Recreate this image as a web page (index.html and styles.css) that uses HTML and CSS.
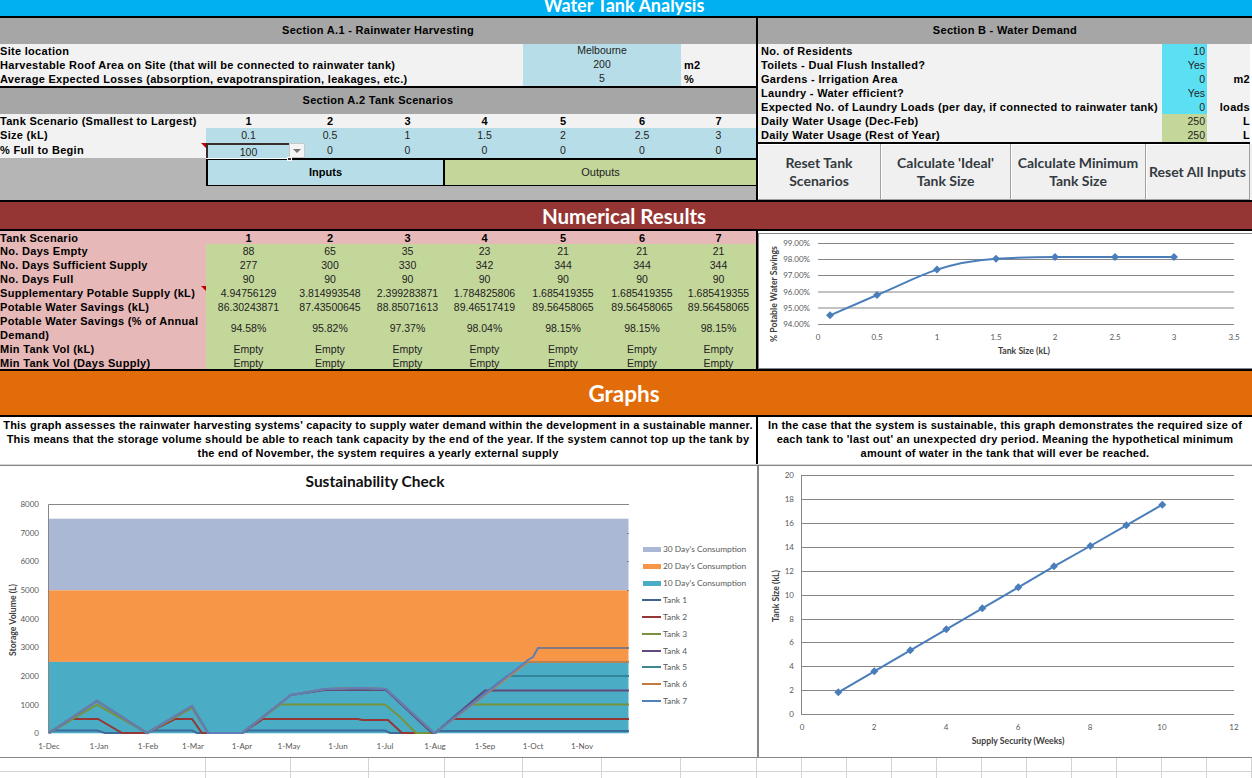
FILE: index.html
```html
<!DOCTYPE html>
<html lang="en">
<head>
    <meta charset="UTF-8">
    <title>Water Tank Analysis</title>
    <link rel="stylesheet" href="styles.css">
</head>
<body>
<div class="sheet">
    <div class="title">Water Tank Analysis</div>

    <div class="top">
        <div class="sec-a">
            <div class="sec-head">Section A.1 - Rainwater Harvesting</div>
            <div class="a1-row"><span class="lbl">Site location</span><span class="val blue">Melbourne</span><span class="lbl unit"></span></div>
            <div class="a1-row"><span class="lbl">Harvestable Roof Area on Site (that will be connected to rainwater tank)</span><span class="val blue">200</span><span class="lbl unit">m2</span></div>
            <div class="a1-row"><span class="lbl">Average Expected Losses (absorption, evapotranspiration, leakages, etc.)</span><span class="val blue">5</span><span class="lbl unit">%</span></div>

            <div class="sec-head sec-head-ruled">Section A.2 Tank Scenarios</div>
            <div class="a2-grid">
                <span class="lbl">Tank Scenario (Smallest to Largest)</span>
                <b>1</b><b>2</b><b>3</b><b>4</b><b>5</b><b>6</b><b>7</b>
                <span class="lbl">Size (kL)</span>
                <span class="val blue">0.1</span><span class="val blue">0.5</span><span class="val blue">1</span><span class="val blue">1.5</span><span class="val blue">2</span><span class="val blue">2.5</span><span class="val blue">3</span>
                <span class="lbl has-note">% Full to Begin<i class="note"></i></span>
                <span class="val blue selected">100<i class="dropdown"></i><i class="handle"></i></span>
                <span class="val blue">0</span><span class="val blue">0</span><span class="val blue">0</span><span class="val blue">0</span><span class="val blue">0</span><span class="val blue">0</span>
            </div>
            <div class="key">
                <div class="key-in">Inputs</div>
                <div class="key-out">Outputs</div>
            </div>
        </div>

        <div class="sec-b">
            <div class="sec-head">Section B - Water Demand</div>
            <div class="b-grid">
                <span class="lbl">No. of Residents</span><span class="val cyan">10</span><span class="lbl unit"></span>
                <span class="lbl">Toilets - Dual Flush Installed?</span><span class="val cyan">Yes</span><span class="lbl unit"></span>
                <span class="lbl">Gardens - Irrigation Area</span><span class="val cyan">0</span><span class="lbl unit">m2</span>
                <span class="lbl">Laundry - Water efficient?</span><span class="val cyan">Yes</span><span class="lbl unit"></span>
                <span class="lbl">Expected No. of Laundry Loads (per day, if connected to rainwater tank)</span><span class="val cyan">0</span><span class="lbl unit">loads</span>
                <span class="lbl">Daily Water Usage (Dec-Feb)</span><span class="val green">250</span><span class="lbl unit">L</span>
                <span class="lbl">Daily Water Usage (Rest of Year)</span><span class="val green">250</span><span class="lbl unit">L</span>
            </div>
            <div class="buttons">
                <button>Reset Tank<br>Scenarios</button>
                <button>Calculate 'Ideal'<br>Tank Size</button>
                <button>Calculate Minimum<br>Tank Size</button>
                <button>Reset All Inputs</button>
            </div>
        </div>
    </div>

    <div class="banner banner-red">Numerical Results</div>

    <div class="results">
        <div class="res-grid">
            <span class="lbl pink">Tank Scenario</span>
            <b class="pink">1</b><b class="pink">2</b><b class="pink">3</b><b class="pink">4</b><b class="pink">5</b><b class="pink">6</b><b class="pink">7</b>

            <span class="lbl pink">No. Days Empty</span>
            <span class="val green">88</span><span class="val green">65</span><span class="val green">35</span><span class="val green">23</span><span class="val green">21</span><span class="val green">21</span><span class="val green">21</span>

            <span class="lbl pink">No. Days Sufficient Supply</span>
            <span class="val green">277</span><span class="val green">300</span><span class="val green">330</span><span class="val green">342</span><span class="val green">344</span><span class="val green">344</span><span class="val green">344</span>

            <span class="lbl pink">No. Days Full</span>
            <span class="val green">90</span><span class="val green">90</span><span class="val green">90</span><span class="val green">90</span><span class="val green">90</span><span class="val green">90</span><span class="val green">90</span>

            <span class="lbl pink has-note">Supplementary Potable Supply (kL)<i class="note"></i></span>
            <span class="val green">4.94756129</span><span class="val green">3.814993548</span><span class="val green">2.399283871</span><span class="val green">1.784825806</span><span class="val green">1.685419355</span><span class="val green">1.685419355</span><span class="val green">1.685419355</span>

            <span class="lbl pink">Potable Water Savings (kL)</span>
            <span class="val green">86.30243871</span><span class="val green">87.43500645</span><span class="val green">88.85071613</span><span class="val green">89.46517419</span><span class="val green">89.56458065</span><span class="val green">89.56458065</span><span class="val green">89.56458065</span>

            <span class="lbl pink lbl-wrap">Potable Water Savings (% of Annual Demand)</span>
            <span class="val green">94.58%</span><span class="val green">95.82%</span><span class="val green">97.37%</span><span class="val green">98.04%</span><span class="val green">98.15%</span><span class="val green">98.15%</span><span class="val green">98.15%</span>

            <span class="lbl pink">Min Tank Vol (kL)</span>
            <span class="val green">Empty</span><span class="val green">Empty</span><span class="val green">Empty</span><span class="val green">Empty</span><span class="val green">Empty</span><span class="val green">Empty</span><span class="val green">Empty</span>

            <span class="lbl pink">Min Tank Vol (Days Supply)</span>
            <span class="val green">Empty</span><span class="val green">Empty</span><span class="val green">Empty</span><span class="val green">Empty</span><span class="val green">Empty</span><span class="val green">Empty</span><span class="val green">Empty</span>
        </div>

        <svg class="chart" width="494" height="138" viewBox="758 231 494 138">
            <rect x="758.5" y="233.5" width="500" height="135" fill="#fff" stroke="#868686"/>
            <path class="grid" d="M818 243.5H1234M818 259.5H1234M818 275.5H1234M818 292H1234M818 308H1234M818 324.5H1234"/>
            <g class="tick" text-anchor="end">
                <text x="810" y="246">99.00%</text>
                <text x="810" y="262">98.00%</text>
                <text x="810" y="278">97.00%</text>
                <text x="810" y="295">96.00%</text>
                <text x="810" y="311">95.00%</text>
                <text x="810" y="327">94.00%</text>
            </g>
            <g class="tick" text-anchor="middle">
                <text x="818" y="340">0</text>
                <text x="877" y="340">0.5</text>
                <text x="937" y="340">1</text>
                <text x="996" y="340">1.5</text>
                <text x="1055" y="340">2</text>
                <text x="1115" y="340">2.5</text>
                <text x="1174" y="340">3</text>
                <text x="1234" y="340">3.5</text>
            </g>
            <text class="axis-title" x="1024" y="354" text-anchor="middle">Tank Size (kL)</text>
            <text class="axis-title" transform="translate(777 294) rotate(-90)" text-anchor="middle">% Potable Water Savings</text>
            <path class="series" d="M830 315.3L877 295C897 287 917 276 937 269.6C957 263 976 260 996 258.7C1016 257.5 1035 257 1055 257L1174 257"/>
            <g class="marks">
                <path d="M830 311.3l4 4-4 4-4-4z"/>
                <path d="M877 291l4 4-4 4-4-4z"/>
                <path d="M937 265.6l4 4-4 4-4-4z"/>
                <path d="M996 254.7l4 4-4 4-4-4z"/>
                <path d="M1055 253l4 4-4 4-4-4z"/>
                <path d="M1115 253l4 4-4 4-4-4z"/>
                <path d="M1174 253l4 4-4 4-4-4z"/>
            </g>
        </svg>
    </div>

    <div class="banner banner-orange">Graphs</div>

    <div class="notes">
        <p>This graph assesses the rainwater harvesting systems' capacity to supply water demand within the development in a sustainable manner.<br>This means that the storage volume should be able to reach tank capacity by the end of the year. If the system cannot top up the tank by<br>the end of November, the system requires a yearly external supply</p>
        <p>In the case that the system is sustainable, this graph demonstrates the required size of<br>each tank to 'last out' an unexpected dry period. Meaning the hypothetical minimum<br>amount of water in the tank that will ever be reached.</p>
    </div>

    <div class="charts">
        <svg class="chart" width="758" height="293" viewBox="0 465 758 293">
            <rect x="-5" y="465.5" width="762.5" height="292" fill="#fff" stroke="#868686"/>
            <text class="chart-title" x="375" y="487" text-anchor="middle">Sustainability Check</text>

            <rect x="49" y="518.7" width="579.5" height="71.6" fill="#aab8d6"/>
            <rect x="49" y="590.3" width="579.5" height="71.6" fill="#f79646"/>
            <rect x="49" y="661.9" width="579.5" height="71.4" fill="#4bacc6"/>
            <path class="axis" d="M48.5 733.5V504.5H629"/>
            <path class="axis" d="M627 533.5h2M627 561.5h2M627 590.5h2"/>

            <g class="tick" text-anchor="end">
                <text x="39" y="507">8000</text>
                <text x="39" y="536">7000</text>
                <text x="39" y="564">6000</text>
                <text x="39" y="593">5000</text>
                <text x="39" y="622">4000</text>
                <text x="39" y="650">3000</text>
                <text x="39" y="679">2000</text>
                <text x="39" y="708">1000</text>
                <text x="39" y="736">0</text>
            </g>
            <g class="tick" text-anchor="middle">
                <text x="49" y="749">1-Dec</text>
                <text x="99" y="749">1-Jan</text>
                <text x="148" y="749">1-Feb</text>
                <text x="193" y="749">1-Mar</text>
                <text x="242" y="749">1-Apr</text>
                <text x="289" y="749">1-May</text>
                <text x="338" y="749">1-Jun</text>
                <text x="385" y="749">1-Jul</text>
                <text x="435" y="749">1-Aug</text>
                <text x="485" y="749">1-Sep</text>
                <text x="533" y="749">1-Oct</text>
                <text x="582" y="749">1-Nov</text>
            </g>
            <text class="axis-title" transform="translate(16 620) rotate(-90)" text-anchor="middle">Storage Volume (L)</text>

            <g class="tanks">
                <path stroke="#3f6a9c" d="M49 733L52 730.5H97L105 733H147L153 730.5H192L197 733H242L248 730.5H385L390 733H435L438 731H629"/>
                <path stroke="#953735" d="M49 733L72 719H98L122 733H147L175 719H192L202 733H242L263 719H358L362 720H388L402 733H435L453 719H629"/>
                <path stroke="#77933c" d="M49 733L97 704.6L147 733L192 708L208 733H242L280 704.6H385L400 717L416 733H435L471 704.6H629"/>
                <path stroke="#604a7b" d="M49 733L97 701L147 733L192 706L208 733H242L291 695L325 690H386L432 733H435L485 690.5H629"/>
                <path stroke="#31859c" d="M49 733L97 701L147 733L192 706L208 733H242L291 695L325 689L360 688L386 689L434 733H435L507 676H629"/>
                <path stroke="#b9814f" d="M49 733L97 701L147 733L192 706L208 733H242L291 695L325 689L360 688L386 689L434 733H435L528 662H629"/>
                <path stroke="#5f7db8" d="M49 733L97 701L147 733L192 706L208 733H242L291 695L325 689L360 688L386 689L434 733H435L528 660L533 657L538 648H540"/>
                <path stroke="#84797c" d="M540 648H629"/>
            </g>

            <g class="legend">
                <rect x="643" y="547" width="18" height="5" fill="#aab8d6"/><text x="663" y="552">30 Day's Consumption</text>
                <rect x="643" y="564" width="18" height="5" fill="#f79646"/><text x="663" y="569">20 Day's Consumption</text>
                <rect x="643" y="581" width="18" height="5" fill="#4bacc6"/><text x="663" y="586">10 Day's Consumption</text>
                <path stroke="#3f6490" d="M642 600H661"/><text x="663" y="603">Tank 1</text>
                <path stroke="#953735" d="M642 617H661"/><text x="663" y="620">Tank 2</text>
                <path stroke="#77933c" d="M642 634H661"/><text x="663" y="637">Tank 3</text>
                <path stroke="#604a7b" d="M642 651H661"/><text x="663" y="654">Tank 4</text>
                <path stroke="#3f8793" d="M642 667H661"/><text x="663" y="670">Tank 5</text>
                <path stroke="#c47a3d" d="M642 684H661"/><text x="663" y="687">Tank 6</text>
                <path stroke="#4f81bd" d="M642 701H661"/><text x="663" y="704">Tank 7</text>
            </g>
        </svg>

        <svg class="chart" width="494" height="293" viewBox="758 465 494 293">
            <rect x="758.5" y="465.5" width="500" height="292" fill="#fff" stroke="#868686"/>
            <path class="grid" d="M801 475.5H1234M801 499.5H1234M801 523.5H1234M801 547.5H1234M801 571.5H1234M801 595.5H1234M801 619.5H1234M801 642.5H1234M801 666.5H1234M801 690.5H1234M801 714.5H1234M801.5 475V714"/>
            <g class="tick" text-anchor="end">
                <text x="794" y="478">20</text>
                <text x="794" y="502">18</text>
                <text x="794" y="526">16</text>
                <text x="794" y="550">14</text>
                <text x="794" y="574">12</text>
                <text x="794" y="598">10</text>
                <text x="794" y="622">8</text>
                <text x="794" y="645">6</text>
                <text x="794" y="669">4</text>
                <text x="794" y="693">2</text>
                <text x="794" y="717">0</text>
            </g>
            <g class="tick" text-anchor="middle">
                <text x="802" y="730">0</text>
                <text x="874" y="730">2</text>
                <text x="946" y="730">4</text>
                <text x="1018" y="730">6</text>
                <text x="1090" y="730">8</text>
                <text x="1162" y="730">10</text>
                <text x="1234" y="730">12</text>
            </g>
            <text class="axis-title" x="1018" y="744" text-anchor="middle">Supply Security (Weeks)</text>
            <text class="axis-title" transform="translate(779 596) rotate(-90)" text-anchor="middle">Tank Size (kL)</text>
            <path class="series" d="M838.3 692.3L874.3 671.3L910.3 650.3L946.3 629.3L982.3 608.3L1018.3 587.3L1054 566.3L1090.3 546L1126.3 525.3L1162.3 504.7"/>
            <g class="marks">
                <path d="M838.3 688.3l4 4-4 4-4-4z"/>
                <path d="M874.3 667.3l4 4-4 4-4-4z"/>
                <path d="M910.3 646.3l4 4-4 4-4-4z"/>
                <path d="M946.3 625.3l4 4-4 4-4-4z"/>
                <path d="M982.3 604.3l4 4-4 4-4-4z"/>
                <path d="M1018.3 583.3l4 4-4 4-4-4z"/>
                <path d="M1054 562.3l4 4-4 4-4-4z"/>
                <path d="M1090.3 542l4 4-4 4-4-4z"/>
                <path d="M1126.3 521.3l4 4-4 4-4-4z"/>
                <path d="M1162.3 500.7l4 4-4 4-4-4z"/>
            </g>
        </svg>
    </div>

    <div class="empty-cells">
        <i></i><i></i><i></i><i></i><i></i><i></i><i></i><i></i><i></i><i></i><i></i><i></i><i></i><i></i><i></i><i></i><i></i><i></i><i></i>
    </div>
</div>
</body>
</html>
```

FILE: styles.css
```css
* {
    box-sizing: border-box;
}
html, body {
    margin: 0;
    height: 100%;
    overflow: hidden;
    background: #fff;
}
body {
    font-family: "Liberation Sans", Arial, sans-serif;
    font-size: 11px;
    color: #000;
}
.sheet {
    width: 1252px;
    height: 778px;
    overflow: hidden;
    display: flex;
    flex-direction: column;
}

/* banners */
.title {
    height: 16px;
    line-height: 10px;
    background: #00b0f0;
    color: #fff;
    font-family: Lato, sans-serif;
    font-weight: 700;
    font-size: 18px;
    text-align: center;
    padding-right: 4px;
}
.banner {
    color: #fff;
    font-family: Lato, sans-serif;
    font-weight: 700;
    display: flex;
    align-items: center;
    justify-content: center;
    border-bottom: 2px solid #000;
}
.banner-red {
    height: 29px;
    background: #963634;
    font-size: 20.5px;
    padding-right: 4px;
}
.banner-orange {
    height: 48px;
    background: #e26b0a;
    font-size: 22.5px;
    padding-right: 4px;
    border-top: 2px solid #000;
}

/* top block */
.top {
    display: grid;
    grid-template-columns: 758px 494px;
    height: 186px;
    border-top: 2px solid #000;
    border-bottom: 2px solid #000;
}
.sec-a {
    border-right: 2px solid #000;
    background: #b5b5b5;
}
.sec-head {
    height: 26px;
    background: #a6a6a6;
    font-weight: 700;
    text-align: center;
    line-height: 25px;
    letter-spacing: 0.3px;
}
.sec-head-ruled {
    height: 28px;
    border-top: 2px solid #000;
}
.lbl {
    font-weight: 700;
    white-space: nowrap;
    letter-spacing: 0.3px;
}
.val {
    text-align: center;
    color: #222;
    font-size: 10.5px;
    white-space: nowrap;
}
.unit {
    background: #f2f2f2;
}
.blue { background: #b7dee8; }
.cyan { background: #5be0f3; }
.green { background: #c4d79b; }
.pink { background: #e6b8b7; }

.a1-row {
    display: grid;
    grid-template-columns: 523px 158px 1fr;
    height: 14px;
    line-height: 14px;
    background: #f2f2f2;
}
.a1-row .val {
    line-height: 12px;
}
.a1-row .unit {
    padding-left: 3px;
}
.a2-grid {
    display: grid;
    grid-template-columns: 206px 85px 78px 77px 77px 80px 78px 1fr;
    grid-template-rows: 14px 15px 15px;
    line-height: 14px;
    background: #f2f2f2;
}
.a2-grid b {
    text-align: center;
}
.has-note {
    position: relative;
}
.note {
    position: absolute;
    right: 0;
    top: 0;
    border-top: 5px solid #c00000;
    border-left: 5px solid transparent;
}
.selected {
    position: relative;
    border: 2px solid #3a2c2c;
    border-bottom: 0;
    box-shadow: 0 1px 0 #fff;
    line-height: 14px;
}
.dropdown {
    position: absolute;
    left: 100%;
    top: -2px;
    width: 16px;
    height: 15px;
    background: #f4f4f4;
    border: 1px solid #c8c8c8;
}
.dropdown::after {
    content: "";
    position: absolute;
    left: 3px;
    top: 5px;
    border-top: 4px solid #777;
    border-left: 4px solid transparent;
    border-right: 4px solid transparent;
}
.handle {
    position: absolute;
    right: -3px;
    bottom: -3px;
    width: 5px;
    height: 4px;
    background: #3a2c2c;
    border: 1px solid #fff;
}
.key {
    display: grid;
    grid-template-columns: 239px 1fr;
    height: 28px;
    margin-left: 206px;
    text-align: center;
    line-height: 25px;
    border-bottom: 2px solid #000;
    border-top: 2px solid #000;
}
.key-in {
    background: #b7dee8;
    font-weight: 700;
    border-left: 2px solid #000;
    border-right: 2px solid #000;
}
.key-out {
    background: #c4d79b;
    color: #222;
}

.sec-b {
    display: flex;
    flex-direction: column;
}
.b-grid {
    display: grid;
    grid-template-columns: 404px 45px 1fr;
    grid-template-rows: repeat(7, 14px);
    line-height: 14px;
    margin-right: 2px;
    background: #f2f2f2;
    border-bottom: 2px solid #000;
    height: 100px;
}
.b-grid .lbl {
    padding-left: 3px;
}
.b-grid .val {
    text-align: right;
    padding-right: 2px;
}
.b-grid .unit {
    text-align: right;
}
.buttons {
    display: grid;
    grid-template-columns: 123px 130px 135px 1fr;
    flex: 1;
    padding-right: 2px;
    background: #f0f0f0;
}
.buttons button {
    font-family: Lato, sans-serif;
    font-weight: 700;
    font-size: 14px;
    line-height: 18px;
    color: #333a40;
    padding: 0;
    background: #f0f0f0;
    border: 0;
    border-right: 1px solid #a0a0a0;
    border-bottom: 1px solid #a0a0a0;
    box-shadow: inset 1px 1px 0 #fff;
}

/* results */
.results {
    display: grid;
    grid-template-columns: 758px 494px;
    height: 138px;
}
.res-grid {
    display: grid;
    grid-template-columns: 206px 85px 78px 77px 77px 80px 78px 75px;
    grid-template-rows: 13px repeat(5, 14px) 28px 14px 13px;
    line-height: 14px;
    border-right: 2px solid #000;
}
.res-grid b {
    text-align: center;
}
.res-grid .val {
    display: flex;
    align-items: center;
    justify-content: center;
}
.lbl-wrap {
    white-space: normal;
}

/* notes */
.notes {
    display: grid;
    grid-template-columns: 758px 494px;
    height: 48px;
    border-bottom: 1px solid #d4d4d4;
}
.notes p {
    margin: 0;
    padding-top: 1px;
    font-weight: 700;
    text-align: center;
    line-height: 14px;
    white-space: nowrap;
    letter-spacing: 0.22px;
}
.notes p:first-child {
    border-right: 2px solid #000;
}

/* charts */
.charts {
    display: grid;
    grid-template-columns: 758px 494px;
    height: 293px;
}
.chart {
    display: block;
}
.tick text, .legend text {
    font-family: Lato, sans-serif;
    font-size: 8px;
    fill: #595959;
}
.legend text {
    font-size: 8.4px;
}
.axis-title {
    font-family: Lato, sans-serif;
    font-size: 8.7px;
    font-weight: 700;
    fill: #404040;
}
.chart-title {
    font-family: Lato, sans-serif;
    font-size: 15.5px;
    font-weight: 700;
    fill: #111;
}
.grid, .axis {
    fill: none;
    stroke: #868686;
}
.series {
    fill: none;
    stroke: #4a7ebb;
    stroke-width: 2;
}
.marks path {
    fill: #4a7ebb;
}
.tanks path {
    fill: none;
    stroke-width: 2;
}
.legend path {
    fill: none;
    stroke-width: 2;
}

/* empty spreadsheet cells under the charts */
.empty-cells {
    flex: 1;
    display: grid;
    grid-template-columns: 206px 85px 78px 76px 78px 79px 79px 76px 45px 45px 45px 45px 45px 45px 45px 45px 45px 45px 45px;
    background: linear-gradient(#d4d4d4, #d4d4d4) 0 13px / 100% 1px no-repeat;
}
.empty-cells i {
    border-right: 1px solid #d4d4d4;
}
```
